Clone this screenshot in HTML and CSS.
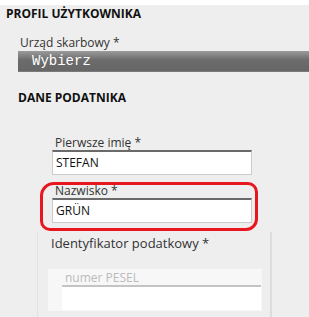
FILE: index.html
```html
<!DOCTYPE html>
<html lang="pl">
<head>
<meta charset="utf-8">
<link rel="stylesheet" href="styles.css">
</head>
<body>
<div class="page">
  <h2 class="title">PROFIL UŻYTKOWNIKA</h2>
  <div class="office">
    <label class="lbl">Urząd skarbowy *</label>
    <div class="select">Wybierz</div>
  </div>
  <h3 class="section">DANE PODATNIKA</h3>
  <div class="fields">
    <div class="field">
      <label class="lbl">Pierwsze imię *</label>
      <div class="input">STEFAN</div>
    </div>
    <div class="field highlighted">
      <label class="lbl">Nazwisko *</label>
      <div class="input">GRÜN</div>
      <div class="mark"></div>
    </div>
    <div class="idbox">
      <label class="lbl id-lbl">Identyfikator podatkowy *</label>
      <div class="pesel">
        <div class="pesel-lbl">numer PESEL</div>
        <div class="input pesel-input"></div>
      </div>
    </div>
  </div>
</div>
</body>
</html>
```
FILE: styles.css
```css
html, body {
  margin: 0;
  padding: 0;
  background: #fff;
}
.page {
  margin-top: 5px;
  height: 312px;
  background: #eeeeee;
  font-family: "Open Sans", "DejaVu Sans", sans-serif;
  color: #222;
  overflow: hidden;
}
.title {
  margin: 0;
  padding: 1px 0 0 6px;
  font-size: 12px;
  line-height: 16px;
  font-weight: 700;
  color: #111;
}
.office {
  padding: 13px 0 0 18px;
}
.lbl {
  display: block;
  font-size: 12px;
  line-height: 15px;
  color: #333;
}
.office .lbl {
  padding-left: 2px;
}
.select {
  margin-top: 1px;
  height: 20px;
  line-height: 20px;
  padding-left: 14px;
  background: linear-gradient(#9a9a9a, #6c6c6c 45%, #666 100%);
  border-bottom: 1px solid #7a7a7a;
  color: #fff;
  font-family: "Liberation Mono", "DejaVu Sans Mono", monospace;
  font-size: 14px;
}
.section {
  margin: 0;
  padding: 18px 0 0 18px;
  font-size: 12px;
  line-height: 16px;
  font-weight: 700;
  color: #111;
}
.fields {
  padding: 29px 0 0 52px;
}
.field {
  width: 200px;
  position: relative;
}
.field + .field {
  margin-top: 8px;
}
.field .lbl {
  padding-left: 3px;
}
.input {
  box-sizing: border-box;
  height: 25px;
  background: #fff;
  border: 1px solid #cccccc;
  border-top: 2px solid #6a6a6a;
  padding-left: 3px;
  font-size: 12px;
  line-height: 22px;
  color: #111;
}
.mark {
  position: absolute;
  left: -12px;
  top: -1px;
  width: 212px;
  height: 43px;
  border: 3px solid #e8161e;
  border-radius: 14px 10px 12px 10px;
  pointer-events: none;
}
.idbox {
  margin: 9px 0 0 -15px;
  width: 235px;
  height: 90px;
  border-left: 1px solid #e2e2e2;
  border-right: 2px solid #dcdcdc;
  padding-top: 4px;
  box-sizing: border-box;
}
.id-lbl {
  padding-left: 13px;
  font-size: 13px;
}
.pesel {
  margin: 18px 0 0 10px;
  width: 214px;
  background: #f7f7f7;
  padding: 2px 0 0 14px;
  box-sizing: border-box;
  height: 42px;
}
.pesel-lbl {
  padding-left: 3px;
  font-size: 12px;
  line-height: 14px;
  color: #bbb;
}
.pesel-input {
  width: 199px;
  border-top: 2px solid #c4c4c4;
  border-left: none;
  border-right: none;
  border-bottom: none;
}
```
